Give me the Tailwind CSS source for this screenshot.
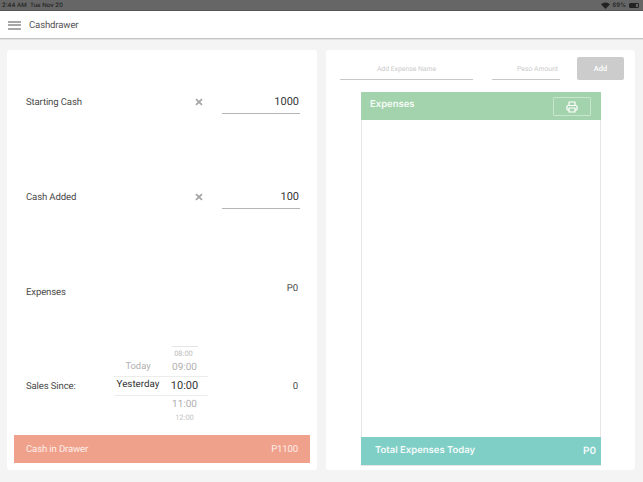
<!DOCTYPE html>
<html lang="en">
<head>
  <meta charset="UTF-8" />
  <title>Cashdrawer</title>
  <script src="https://cdn.jsdelivr.net/npm/@tailwindcss/browser@4"></script>
</head>
<body class="w-[643px] h-[482px] overflow-hidden bg-[#f4f4f4] font-['Roboto',sans-serif] text-[#4a4a4a] [text-rendering:geometricPrecision]">
  <!-- status bar -->
  <div class="h-[11px] bg-[#666666] border-b border-[#555555] flex items-center justify-between pl-[2px] pr-[4px] text-[6px] text-[#222222] font-['Inter',sans-serif] font-medium">
    <span>2:44 AM &nbsp;Tue Nov 20</span>
    <div class="flex items-center gap-[2px]">
      <svg width="9" height="7" viewBox="0 0 9 7"><path d="M0 2.2a6.5 6.5 0 0 1 9 0L4.5 7z" fill="#222222"/></svg>
      <span>69%</span>
      <div class="w-[10px] h-[5px] border border-[#222222] rounded-[1px] ml-[1px]"><div class="w-[6px] h-full bg-[#222222]"></div></div>
    </div>
  </div>

  <!-- header -->
  <header class="h-[28px] bg-white border-b border-[#c4c4c4] flex items-center pl-[8px] pt-[1px] shadow-[0_1px_0_#e2e2e2]">
    <div class="w-[13px] flex flex-col gap-[1.5px]">
      <div class="h-[2px] bg-[#a8a8a8]"></div>
      <div class="h-[2px] bg-[#a8a8a8]"></div>
      <div class="h-[2px] bg-[#a8a8a8]"></div>
    </div>
    <h1 class="ml-[8px] pt-[2px] text-[9.6px] tracking-[-0.15px] text-[#555555]">Cashdrawer</h1>
  </header>

  <main class="flex gap-[9px] pl-[7px] pt-[11px]">
    <!-- left card -->
    <section class="w-[310px] h-[420px] bg-white rounded-[3px] pt-[5px] px-[7px]">
      <div class="h-[94.5px] flex items-center pl-[12px] pr-[10px] text-[9.6px] tracking-[-0.15px]">
        <span class="w-[170px] pt-[2px]">Starting Cash</span>
        <svg class="w-[8px] h-[8px]" viewBox="0 0 8 8"><path d="M1 1l6 6M7 1L1 7" stroke="#a6a6a6" stroke-width="1.8"/></svg>
        <div class="ml-[19px] w-[78px] h-[24px] border-b border-[#b5b5b5] text-right text-[11px] tracking-normal text-[#333333] leading-[24px] pr-[1px]">1000</div>
      </div>
      <div class="h-[94.5px] flex items-center pl-[12px] pr-[10px] text-[9.6px] tracking-[-0.15px]">
        <span class="w-[170px] pt-[2px]">Cash Added</span>
        <svg class="w-[8px] h-[8px]" viewBox="0 0 8 8"><path d="M1 1l6 6M7 1L1 7" stroke="#a6a6a6" stroke-width="1.8"/></svg>
        <div class="ml-[19px] w-[78px] h-[24px] border-b border-[#b5b5b5] text-right text-[11px] tracking-normal text-[#333333] leading-[24px] pr-[1px]">100</div>
      </div>
      <div class="h-[94.5px] flex items-center justify-between pl-[12px] pr-[12px] pt-[1px] text-[9.6px] tracking-[-0.15px]">
        <span class="pt-[2px]">Expenses</span>
        <span class="-mt-[6px]">P0</span>
      </div>
      <div class="h-[94.5px] flex items-center pl-[12px] pr-[12px] text-[9.6px] tracking-[-0.15px]">
        <span class="w-[88px] pt-[2px]">Sales Since:</span>
        <!-- date/time picker -->
        <div class="w-[94px] h-[78px] self-start mt-[7px] flex flex-col items-stretch text-center overflow-hidden tracking-normal">
          <div class="h-[4px] flex justify-end pr-[10px]"><div class="w-[26px] h-px bg-[#e4e4e4]"></div></div>
          <div class="h-[7px] flex"><span class="w-[47px]"></span><span class="flex-1 text-[7.5px] leading-[7px] text-[#bcbcbc] pr-[2px]">08:00</span></div>
          <div class="h-[19.5px] flex items-center text-[10px] text-[#b0b0b0] pt-[2px]"><span class="w-[48px] text-[9.4px]">Today</span><span class="flex-1 pr-[1px]">09:00</span></div>
          <div class="h-[19.5px] flex items-center border-y border-[#ececec] text-[11px] text-[#333333]"><span class="w-[48px] whitespace-nowrap text-[9.8px]">Yesterday</span><span class="flex-1 pr-[1px]">10:00</span></div>
          <div class="h-[17px] flex items-center text-[10px] text-[#b0b0b0] pt-[1px]"><span class="w-[48px]"></span><span class="flex-1 pr-[1px]">11:00</span></div>
          <div class="h-[8px] mt-[1px] flex items-center text-[7.5px] text-[#c4c4c4]"><span class="w-[48px]"></span><span class="flex-1 pr-[1px]">12:00</span></div>
        </div>
        <span class="ml-auto pt-[2px]">0</span>
      </div>
      <div class="mt-[2px] h-[28px] w-[296px] bg-[#f0a18b] flex items-center justify-between pl-[12px] pr-[12px] pt-[2px] text-[9.6px] tracking-[-0.15px] text-[#fdeee9]">
        <span>Cash in Drawer</span>
        <span>P1100</span>
      </div>
    </section>

    <!-- right card -->
    <section class="w-[309px] h-[420px] bg-white rounded-[3px] pt-[7px] flex flex-col">
      <div class="flex items-end h-[23px] pl-[14px]">
        <div class="w-[133px] h-[23px] border-b border-[#c8c8c8] text-center text-[6.8px] leading-[24px] text-[#c9c9c9]">Add Expense Name</div>
        <div class="ml-[19px] w-[68px] h-[23px] border-b border-[#c8c8c8] text-right pr-[2px] text-[6.8px] leading-[24px] text-[#c9c9c9]">Peso Amount</div>
        <button class="ml-[17px] w-[47px] h-[23px] bg-[#cccccc] rounded-[2px] text-white text-[7.5px] font-medium">Add</button>
      </div>
      <div class="ml-[35px] mt-[12px] w-[240px] h-[374px] border-x border-b border-[#e6e6e6] flex flex-col rounded-b-[1px]">
        <div class="-mx-px h-[28px] bg-[#a3d3ac] flex items-start justify-between pl-[9px] pr-[10px] rounded-t-[1px] font-['Inter',sans-serif]">
          <span class="text-[9.5px] font-semibold text-[#f5fbf6] mt-[6px]">Expenses</span>
          <div class="mt-[5px] w-[38px] h-[19px] border border-[#c8e6ce] rounded-[1px] flex items-center justify-center">
            <svg width="12" height="12" viewBox="0 0 24 24" fill="none" stroke="#ffffff" stroke-width="2.4" stroke-linejoin="round"><path d="M6 9V2h12v7"/><path d="M6 18H3a1 1 0 0 1-1-1v-6a2 2 0 0 1 2-2h16a2 2 0 0 1 2 2v6a1 1 0 0 1-1 1h-3"/><path d="M6 14h12v8H6z"/></svg>
          </div>
        </div>
        <div class="flex-1"></div>
        <div class="-mx-px h-[28px] bg-[#80cfc7] flex items-center justify-between pl-[14px] pr-[5px] pt-[1px] text-[9.5px] font-semibold text-[#f4fbfa] font-['Inter',sans-serif]">
          <span>Total Expenses Today</span>
          <span class="text-[10px]">P0</span>
        </div>
      </div>
    </section>
  </main>
</body>
</html>
